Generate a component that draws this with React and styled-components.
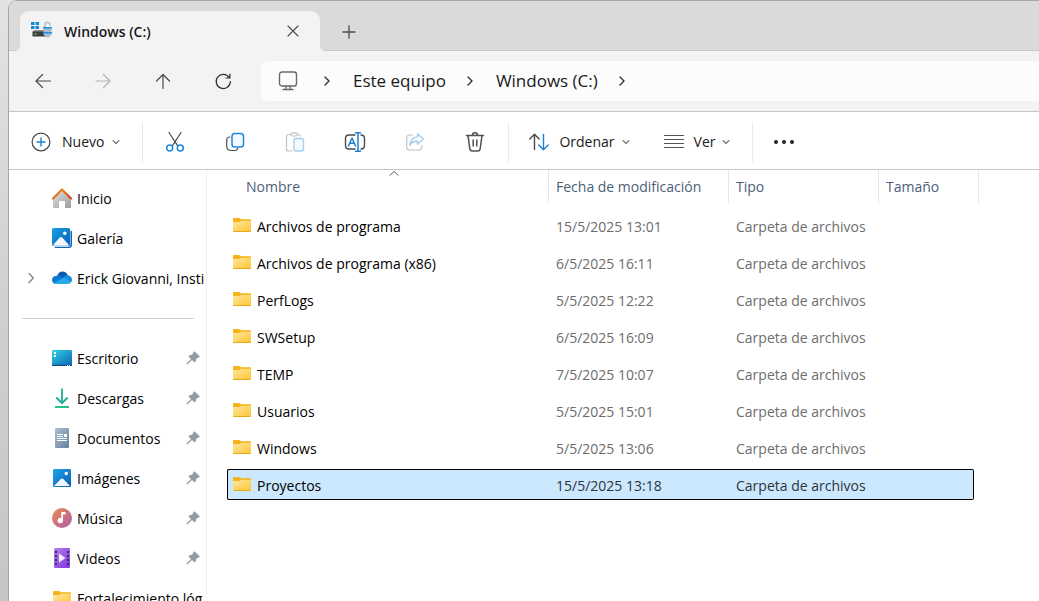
import React from 'react';
import styled, { createGlobalStyle, css } from 'styled-components';

const GlobalStyle = createGlobalStyle`
  *, *::before, *::after { box-sizing: border-box; }
  body {
    margin: 0;
    background: linear-gradient(180deg, #e3e3e3 0%, #d0d0d0 50%, #c6c6c6 100%);
    font-family: "Open Sans", "Noto Sans", sans-serif;
    font-size: 14px;
    line-height: 20px;
    color: #191919;
  }
  button, a { font: inherit; color: inherit; text-decoration: none; }
  svg { display: block; flex: none; }
`;

const Desktop = styled.div`
  height: 100vh;
  padding-left: 8px;
  overflow: hidden;
`;

const Window = styled.div`
  display: flex;
  flex-direction: column;
  height: 100%;
  overflow: hidden;
  background: #fff;
  border: solid #a6a6a6;
  border-width: 1px 0 0 1px;
  border-top-left-radius: 9px;
`;

const PlainButton = styled.button`
  display: inline-flex;
  align-items: center;
  justify-content: center;
  padding: 0;
  border: 0;
  background: none;
  white-space: nowrap;
`;

/* Tabs */

const TabStrip = styled.header`
  flex: none;
  display: flex;
  align-items: flex-end;
  height: 50px;
  padding-left: 11px;
  background: #dadada;
  box-shadow: inset 0 -1px #c8c8c8;
`;

const Tab = styled.div`
  position: relative;
  display: flex;
  align-items: center;
  width: 300px;
  height: 40px;
  padding: 0 17px 0 11px;
  background: #f3f3f3;
  border-radius: 9px 9px 0 0;
  &::before, &::after {
    content: "";
    position: absolute;
    bottom: 0;
    width: 4px;
    height: 4px;
  }
  &::before {
    right: 100%;
    background: radial-gradient(circle at 0 0, transparent 3px, #f3f3f3 4px);
  }
  &::after {
    left: 100%;
    background: radial-gradient(circle at 100% 0, transparent 3px, #f3f3f3 4px);
  }
`;

const TabTitle = styled.span`
  flex: 1;
  margin-left: 11px;
  padding-top: 2px;
  font-weight: 600;
`;

const TabButton = styled(PlainButton)`
  width: 20px;
  height: 20px;
`;

const NewTabButton = styled(PlainButton)`
  width: 20px;
  height: 38px;
  margin-left: 19px;
`;

/* Navigation */

const NavBar = styled.nav`
  flex: none;
  display: flex;
  align-items: center;
  height: 61px;
  padding-left: 14px;
  background: #f3f3f3;
  border-bottom: 1px solid #c6c6c6;
`;

const NavButtons = styled.div`
  display: flex;
  gap: 20px;
`;

const NavButton = styled(PlainButton)`
  width: 40px;
  height: 40px;
`;

const AddressBar = styled.div`
  flex: 1;
  display: flex;
  align-items: center;
  height: 40px;
  margin-left: 18px;
  padding-left: 17px;
  background: #fcfcfc;
  border-radius: 6px 0 0 6px;
`;

const Crumbs = styled.ol`
  display: flex;
  align-items: center;
  gap: 22px;
  margin: 0 0 0 25px;
  padding: 0;
  list-style: none;
  font-size: 17px;
  line-height: 24px;
`;

const Crumb = styled.li`
  display: flex;
  align-items: center;
  gap: 20px;
`;

/* Commands */

const Toolbar = styled.div`
  flex: none;
  display: flex;
  align-items: center;
  height: 58px;
  padding: 2px 0 0 22px;
  border-bottom: 1px solid #c6c6c6;
`;

const CommandButton = styled(PlainButton)`
  height: 40px;
  gap: ${p => p.$gap ?? 10}px;
`;

const Chevron = styled.span`
  margin-left: -3px;
`;

const MoreButton = styled(PlainButton)`
  width: 20px;
  height: 40px;
  margin-left: 21px;
`;

const IconRow = styled.div`
  display: flex;
  gap: 20px;
  padding: 0 13px 0 12px;
`;

const IconButton = styled(PlainButton)`
  width: 40px;
  height: 40px;
`;

const Divider = styled.span`
  width: 1px;
  height: 40px;
  margin-left: ${p => p.$before ?? 0}px;
  background: #ebebeb;
`;

const ViewCommands = styled.div`
  display: flex;
  gap: 34px;
  padding-left: 20px;
`;

/* Sidebar */

const Body = styled.div`
  flex: 1;
  min-height: 0;
  display: flex;
`;

const Sidebar = styled.nav`
  flex: none;
  width: 198px;
  padding-top: 8px;
  overflow: hidden;
  border-right: 1px solid #f0f0f0;
  color: #000;
`;

const PlaceList = styled.ul`
  margin: 0;
  padding: 0;
  list-style: none;
`;

const Place = styled.a`
  display: grid;
  grid-template-columns: 20px 20px minmax(0, 1fr) ${p => (p.$pinned ? 'auto' : '')};
  align-items: center;
  column-gap: 5px;
  height: 40px;
  padding-left: 18px;
  > svg:nth-child(2) { justify-self: center; }
`;

const PlaceLabel = styled.span`
  padding-top: 2px;
  white-space: nowrap;
`;

const PinBox = styled.span`
  padding-right: 6px;
`;

const SidebarRule = styled.hr`
  height: 1px;
  margin: 20px 12px 19px 13px;
  border: 0;
  background: #d0d0d0;
`;

/* Files */

const FilePane = styled.main`
  flex: 1;
  min-width: 0;
  padding: 0 60px 0 20px;
  overflow: hidden;
`;

const FileTable = styled.table`
  width: 100%;
  table-layout: fixed;
  border-collapse: separate;
  border-spacing: 0;
`;

const Col = styled.col`
  width: ${p => p.$w ? `${p.$w}px` : 'auto'};
`;

const HeadCell = styled.th`
  padding: 0 0 4px;
  text-align: left;
  font-weight: 400;
  color: #4c607a;
`;

const HeadLabel = styled.div`
  position: relative;
  display: flex;
  align-items: center;
  height: 33px;
  padding-left: ${p => p.$inset ?? 7}px;
  border-right: 1px solid #e5e5e5;
`;

const SortMark = styled.svg`
  position: absolute;
  top: 0;
  left: 50%;
`;

const Cell = styled.td`
  padding: 3px 0;
  color: #6d6d6d;
`;

const CellBox = styled.div`
  display: flex;
  align-items: center;
  gap: 6px;
  height: 31px;
  padding: 2px 0 0 7px;
  border: 0 solid transparent;
  border-width: 1px 0;
  white-space: nowrap;
`;

const NameBox = styled(CellBox)`
  padding-left: 5px;
  border-left-width: 1px;
  color: #000;
`;

const EndBox = styled(CellBox)`
  margin-right: 5px;
  border-right-width: 1px;
`;

const Row = styled.tr`
  ${p => p.$selected && css`
    ${CellBox} { background: #cce8ff; border-color: #000; color: #2e3439; }
    ${NameBox} { border-radius: 2px 0 0 2px; color: #000; }
    ${EndBox} { border-radius: 0 2px 2px 0; }
  `}
`;

/* Icons */

const Line = ({ w = 20, h = w, stroke = '#4a4a4a', sw = 1.2, children, ...rest }) => (
  <svg width={w} height={h} viewBox={`0 0 ${w} ${h}`} fill="none" stroke={stroke} strokeWidth={sw}
    strokeLinecap="round" strokeLinejoin="round" aria-hidden="true" {...rest}>{children}</svg>
);

const DriveIcon = () => (
  <svg width="22" height="20" viewBox="0 0 22 20" aria-hidden="true">
    <path d="M0 1h3.500v3H0zM4.500 1H8v3H4.500zM0 5h3.500v3H0zM4.500 5H8v3H4.500z" fill="#1488d8" />
    <path d="M3 9h14v2H1.500z" fill="#8c8c8c" />
    <path d="M1.500 10.500h14v5h-14z" fill="#3d3d3d" />
    <path d="M3.500 12.300h2v1.500h-2z" fill="#2fe04a" />
    <path d="M14 7V4a2.500 2.500 0 0 1 5-.3V5" fill="none" stroke="#b9c3cb" strokeWidth="1.700" />
    <path d="M12.500 6.500h8v6c0 2.500-2 3.500-4 4-2-.5-4-1.500-4-4z" fill="#a9bccb" />
    <path d="M12 6h9v1.600h-9zM12 11h9v1.600h-9z" fill="#1a94e2" />
  </svg>
);

const CloseIcon = () => <Line w={14} sw={1.1}><path d="M2 2l10 10M12 2L2 12" /></Line>;
const PlusIcon = () => <Line w={14} sw={1.3}><path d="M7 1v12M1 7h12" /></Line>;
const BackIcon = () => <Line><path d="M17.500 10H3M9.500 3.500L3 10l6.500 6.500" /></Line>;
const ForwardIcon = () => <Line stroke="#b4b4b4"><path d="M3 10h14M10.500 3.500L17 10l-6.500 6.500" /></Line>;
const UpIcon = () => <Line><path d="M10 17.500V3.500M3.500 10L10 3.500l6.500 6.500" /></Line>;
const RefreshIcon = () => (
  <Line stroke="#303030"><path d="M16.200 6.500A7.100 7.100 0 1 0 17.400 10.500M16.900 3v4h-4" /></Line>
);
const MonitorIcon = () => (
  <Line stroke="#6a6a6a" sw={1.4}>
    <rect x="1.500" y="1" width="17" height="14" rx="2.500" />
    <path d="M8 15v2.500M12 15v2.500M5 18.500h10" />
  </Line>
);
const CrumbArrow = () => <Line w={8} h={12} stroke="#333" sw={1.4}><path d="M2 2l4 4-4 4" /></Line>;
const SmallChevron = () => <Line w={8} h={6} stroke="#777" sw={1.1}><path d="M1 1.500l3 3 3-3" /></Line>;
const TreeArrow = () => <Line w={8} h={12} stroke="#8a8a8a" sw={1.5}><path d="M2 1.500L6.300 6 2 10.500" /></Line>;

const NewIcon = () => (
  <Line>
    <circle cx="10" cy="10" r="8.900" />
    <path d="M10 6v8M6 10h8" stroke="#1a7fd0" strokeWidth="1.400" />
  </Line>
);
const CutIcon = () => (
  <Line w={20} h={22}>
    <path d="M4 1.500l8.700 13.300M16 1.500L7.300 14.800" />
    <g stroke="#1e88dc" strokeWidth="1.500"><circle cx="4.700" cy="17" r="3" /><circle cx="15.300" cy="17" r="3" /></g>
  </Line>
);
const CopyIcon = () => (
  <Line>
    <path d="M5 5C3 5 1.700 6 1.700 8v6c0 3 1.500 4.500 4.300 4.500h3.500c1.700 0 2.800-.8 3.200-2" />
    <rect x="7" y="1.500" width="11.500" height="13.500" rx="2.800" fill="#f3f9fe" stroke="#1e88dc" strokeWidth="1.500" />
  </Line>
);
const PasteIcon = () => (
  <Line stroke="#c2c2c2">
    <path d="M6 2.500H3.500c-1.200 0-2 .8-2 2v12.500c0 1.200.8 2 2 2h3.500M12.500 2.500h1c1 0 1.700.6 1.900 1.500" />
    <rect x="6" y=".8" width="6.500" height="3.200" rx="1.500" />
    <rect x="9" y="6.500" width="9.500" height="12.500" rx="2" fill="#f5faff" stroke="#a3cff0" strokeWidth="1.400" />
  </Line>
);
const RenameIcon = () => (
  <Line w={22} h={20} sw={1.400}>
    <path d="M11 3H5C2.800 3 1.500 4.300 1.500 6.500v7C1.500 15.700 2.800 17 5 17h6M17 3c2.200 0 3.500 1.300 3.500 3.500v7c0 2.200-1.300 3.500-3.500 3.500" />
    <path d="M4.500 14L8 6l3.500 8M5.800 11.300h4.400M14 1v18M11.500.8h5M11.500 19.200h5" stroke="#1e7fd4" strokeWidth="1.500" />
  </Line>
);
const ShareIcon = () => (
  <Line stroke="#c2c2c2">
    <path d="M7.500 3H5C3 3 1.700 4.300 1.700 6.300v8.400C1.700 16.700 3 18 5 18h8.500c2 0 3.300-1.300 3.300-3.300v-1.200" />
    <path d="M12.500 1.800L18.500 7l-6 5.200V9.300c-4-.2-6 1.200-7.700 4C5.200 8.500 8 5.300 12.500 4.900z" stroke="#a3cff0" fill="#f5faff" strokeWidth="1.400" />
  </Line>
);
const TrashIcon = () => (
  <Line sw={1.500} stroke="#505050">
    <path d="M1.500 3.500h17M7.500 3.300a2.500 2.500 0 0 1 5 0M3 3.700l1.800 13c.2 1.400 1 2.300 2.400 2.300h5.600c1.400 0 2.200-.9 2.400-2.300l1.800-13M8.200 8v6M11.800 8v6" />
  </Line>
);
const SortIcon = () => (
  <Line sw={1.400}>
    <path d="M5.500 17.500v-15M.8 7L5.500 2.300 10.200 7" />
    <path d="M14.500 2.500v15M9.800 13l4.700 4.700 4.700-4.700" stroke="#1e7fd4" />
  </Line>
);
const ViewIcon = () => (
  <svg width="20" height="20" viewBox="0 0 20 20" fill="#555" aria-hidden="true">
    <path d="M0 3h20v1H0zM0 7h20v1H0zM0 11h20v1H0zM0 15h20v1H0z" />
  </svg>
);
const MoreIcon = () => (
  <svg width="20" height="20" viewBox="0 0 20 20" fill="#222" aria-hidden="true">
    <circle cx="2" cy="10" r="2" /><circle cx="10" cy="10" r="2" /><circle cx="18" cy="10" r="2" />
  </svg>
);

const Gradient = ({ id, from, to }) => (
  <linearGradient id={id} x1="0" y1="0" x2="1" y2="1">
    <stop stopColor={from} /><stop offset="1" stopColor={to} />
  </linearGradient>
);
const Art = ({ w = 20, h = 20, children }) => (
  <svg width={w} height={h} viewBox={`0 0 ${w} ${h}`} aria-hidden="true">{children}</svg>
);

const HomeIcon = () => (
  <Art>
    <Gradient id="homeWall" from="#e0e0e0" to="#9c9c9c" />
    <Gradient id="homeRoof" from="#f59a1b" to="#cf4214" />
    <path d="M10 3l9 8v8.200c0 .5-.3.800-.8.800H13v-7H7v7H1.800c-.5 0-.8-.3-.8-.8V11z" fill="url(#homeWall)" />
    <path d="M1 10.500L10 1.500l9 9" fill="none" stroke="url(#homeRoof)" strokeWidth="2.200" strokeLinecap="round" strokeLinejoin="round" />
  </Art>
);
const GalleryIcon = () => (
  <Art>
    <Gradient id="galleryBlue" from="#1aa0e6" to="#0a5fb4" />
    <path d="M18.500 2.500c1 .2 1.500.8 1.500 1.700V17c0 1.900-1.100 3-3 3H4c-.9 0-1.400-.4-1.600-1.200H16c1.600 0 2.500-1 2.500-2.600z" fill="#1064b4" />
    <rect width="18" height="18" rx="1.500" fill="url(#galleryBlue)" />
    <path d="M1 17l6.600-7.200a2 2 0 0 1 2.800 0L17 17c-.4.500-.8.700-1.400.700H2.400C1.800 17.700 1.400 17.500 1 17z" fill="#f2f8fd" />
    <circle cx="12.800" cy="5.300" r="1.700" fill="#fff" />
  </Art>
);
const CloudIcon = () => (
  <Art>
    <path d="M5 8.500C5.800 5.300 8 3.500 10.500 3.500c2.600 0 4.500 1.500 5.300 4l-3 4z" fill="#0b5cad" />
    <path d="M4.500 16C1.700 16 0 14.200 0 12c0-2.400 1.800-4 4-4 1.500-.8 3.500-.5 5 .6l6 4.400L8 16z" fill="#0f7ad6" />
    <path d="M11 10.500c1-2.500 2.700-3.300 4.800-3.200C18.300 7.500 20 9.300 20 11.800c0 1-.3 1.800-.8 2.500z" fill="#1590df" />
    <path d="M1.600 15L12 9.800l7.300 4.300c-.8 1.200-2 1.900-3.500 1.900H4.500c-1.200 0-2.200-.4-2.900-1z" fill="#28a8ea" />
  </Art>
);
const DesktopIcon = () => (
  <Art>
    <Gradient id="desk" from="#32d3dc" to="#0b63bd" />
    <rect y="2" width="20" height="16" rx="1.200" fill="url(#desk)" />
    <path d="M0 16.800h20c0 .8-.4 1.200-1.200 1.200H1.200C.4 18 0 17.600 0 16.800z" fill="#154c7c" />
    <path d="M2 4h2v2H2zM2 7h2v2H2zM15 16.900h1v1h-1zM17 16.900h1v1h-1z" fill="#f0ffff" />
  </Art>
);
const DownloadIcon = () => (
  <Art w={14}>
    <path d="M7 .500v14M1.300 9.500L7 15.200l5.700-5.700" fill="none" stroke="#1cae90" strokeWidth="1.800" />
    <path d="M0 18h14v2H0z" fill="#2cc08c" />
  </Art>
);
const DocumentIcon = () => (
  <Art w={14}>
    <Gradient id="docBlue" from="#aabfd2" to="#66819d" />
    <rect width="14" height="20" rx="1.200" fill="url(#docBlue)" />
    <path d="M2 6h6v1H2zM2 8h6v1H2zM9 6h3v3H9zM2 10h10v1H2zM2 12h10v1H2z" fill="#fff" />
  </Art>
);
const PicturesIcon = () => (
  <Art w={18} h={18}>
    <Gradient id="picBlue" from="#1fa3e8" to="#0a5fb4" />
    <rect width="18" height="18" rx="1.200" fill="url(#picBlue)" />
    <path d="M1 17l6.800-7a1.800 1.800 0 0 1 2.500 0L17 17z" fill="#f2f8fd" />
    <circle cx="13.300" cy="4.500" r="1.700" fill="#fff" />
  </Art>
);
const MusicIcon = () => (
  <Art>
    <Gradient id="musicDisc" from="#f08c4c" to="#a85cae" />
    <circle cx="10" cy="10" r="10" fill="url(#musicDisc)" />
    <path d="M9.300 4h3.500c.5 0 .9.300.9.800v1c0 .5-.4.800-.9.800H11v6.100A2.700 2.700 0 1 1 9.300 10z" fill="#fff" />
  </Art>
);
const VideoIcon = () => (
  <Art w={16}>
    <Gradient id="videoPurple" from="#b77df0" to="#7d38d8" />
    <rect width="16" height="20" rx="1.200" fill="url(#videoPurple)" />
    <path d="M1 3h2v2H1zM1 7h2v2H1zM1 11h2v2H1zM1 15h2v2H1zM13 3h2v2h-2zM13 7h2v2h-2zM13 11h2v2h-2zM13 15h2v2h-2z" fill="#3f2a66" />
    <path d="M5 5.500l6.500 4.500L5 14.500z" fill="#f4ecff" />
  </Art>
);
const FolderIcon = ({ h = 14 }) => (
  <Art w={18} h={h}>
    <linearGradient id="folderFace" x1="0" y1="0" x2="1" y2="1">
      <stop stopColor="#ffe7a0" /><stop offset="1" stopColor="#fdc638" />
    </linearGradient>
    <path d="M0 1c0-.6.400-1 1-1h5c.5 0 .8.200 1.200.6L8 1.300h9c.6 0 1 .4 1 1V6H0z" fill="#f5b21a" />
    <path d="M0 4h6.500L8 2.700h10V13H0z" fill="url(#folderFace)" />
    <path d="M0 13h18c0 .7-.4 1-1 1H1c-.6 0-1-.3-1-1z" fill="#e8a918" />
  </Art>
);
const PinIcon = () => (
  <Art w={14} h={14}>
    <path d="M8.700.6L13.400 5c.5.500.3 1-.2 1.200l-2.700 1.300-1 3.300c-.1.600-.7.800-1.200.4L6 9 1.300 13.500.400 13.300.600 12.500 5 8 2.800 5.800c-.4-.5-.2-1 .3-1.200l3.300-1L7.600.9c.2-.5.7-.6 1.100-.3z" fill="#929ca4" />
  </Art>
);

const crumbs = ['Este equipo', 'Windows (C:)'];

const tools = [
  ['Cortar', CutIcon], ['Copiar', CopyIcon], ['Pegar', PasteIcon],
  ['Cambiar nombre', RenameIcon], ['Compartir', ShareIcon], ['Eliminar', TrashIcon],
];

const places = [
  ['Inicio', HomeIcon], ['Galería', GalleryIcon], ['Erick Giovanni, Insti', CloudIcon, 'tree'],
];

const pinned = [
  ['Escritorio', DesktopIcon, 'pin'], ['Descargas', DownloadIcon, 'pin'],
  ['Documentos', DocumentIcon, 'pin'], ['Imágenes', PicturesIcon, 'pin'],
  ['Música', MusicIcon, 'pin'], ['Videos', VideoIcon, 'pin'],
  ['Fortalecimiento lóg', FolderIcon],
];

const files = [
  ['Archivos de programa', '15/5/2025 13:01'],
  ['Archivos de programa (x86)', '6/5/2025 16:11'],
  ['PerfLogs', '5/5/2025 12:22'],
  ['SWSetup', '6/5/2025 16:09'],
  ['TEMP', '7/5/2025 10:07'],
  ['Usuarios', '5/5/2025 15:01'],
  ['Windows', '5/5/2025 13:06'],
  ['Proyectos', '15/5/2025 13:18'],
];

const Places = ({ items }) => (
  <PlaceList>
    {items.map(([label, Icon, extra]) => (
      <li key={label}>
        <Place href="#" $pinned={extra === 'pin'}>
          {extra === 'tree' ? <TreeArrow /> : <span />}
          <Icon />
          <PlaceLabel>{label}</PlaceLabel>
          {extra === 'pin' && <PinBox><PinIcon /></PinBox>}
        </Place>
      </li>
    ))}
  </PlaceList>
);

const MenuCommand = ({ icon, label, gap }) => (
  <CommandButton $gap={gap}>
    {icon}
    {label}
    <Chevron><SmallChevron /></Chevron>
  </CommandButton>
);

export default function App() {
  return (
    <Desktop>
      <GlobalStyle />
      <Window>
        <TabStrip>
          <Tab>
            <DriveIcon />
            <TabTitle>Windows (C:)</TabTitle>
            <TabButton aria-label="Cerrar pestaña"><CloseIcon /></TabButton>
          </Tab>
          <NewTabButton aria-label="Nueva pestaña"><PlusIcon /></NewTabButton>
        </TabStrip>

        <NavBar aria-label="Navegación">
          <NavButtons>
            <NavButton aria-label="Atrás"><BackIcon /></NavButton>
            <NavButton aria-label="Adelante" disabled><ForwardIcon /></NavButton>
            <NavButton aria-label="Subir"><UpIcon /></NavButton>
            <NavButton aria-label="Actualizar"><RefreshIcon /></NavButton>
          </NavButtons>
          <AddressBar>
            <MonitorIcon />
            <Crumbs>
              <li><CrumbArrow /></li>
              {crumbs.map(c => (
                <Crumb key={c}><a href="#">{c}</a><CrumbArrow /></Crumb>
              ))}
            </Crumbs>
          </AddressBar>
        </NavBar>

        <Toolbar>
          <MenuCommand icon={<NewIcon />} label="Nuevo" gap={11} />
          <Divider $before={22} />
          <IconRow>
            {tools.map(([label, Icon]) => (
              <IconButton key={label} aria-label={label}><Icon /></IconButton>
            ))}
          </IconRow>
          <Divider />
          <ViewCommands>
            <MenuCommand icon={<SortIcon />} label="Ordenar" />
            <MenuCommand icon={<ViewIcon />} label="Ver" />
          </ViewCommands>
          <Divider $before={22} />
          <MoreButton aria-label="Ver más"><MoreIcon /></MoreButton>
        </Toolbar>

        <Body>
          <Sidebar aria-label="Panel de navegación">
            <Places items={places} />
            <SidebarRule />
            <Places items={pinned} />
          </Sidebar>

          <FilePane>
            <FileTable>
              <colgroup>
                <Col /><Col $w={180} /><Col $w={150} /><Col $w={100} />
              </colgroup>
              <thead>
                <tr>
                  <HeadCell aria-sort="ascending">
                    <HeadLabel $inset={19}>
                      Nombre
                      <SortMark width="12" height="7" viewBox="0 0 12 7" fill="none" stroke="#666" aria-hidden="true">
                        <path d="M1.500 5.500L6 1.500l4.500 4" />
                      </SortMark>
                    </HeadLabel>
                  </HeadCell>
                  <HeadCell><HeadLabel>Fecha de modificación</HeadLabel></HeadCell>
                  <HeadCell><HeadLabel>Tipo</HeadLabel></HeadCell>
                  <HeadCell><HeadLabel>Tamaño</HeadLabel></HeadCell>
                </tr>
              </thead>
              <tbody>
                {files.map(([name, date]) => (
                  <Row key={name} $selected={name === 'Proyectos'}>
                    <Cell><NameBox><FolderIcon h={18} />{name}</NameBox></Cell>
                    <Cell><CellBox>{date}</CellBox></Cell>
                    <Cell><CellBox>Carpeta de archivos</CellBox></Cell>
                    <Cell><EndBox /></Cell>
                  </Row>
                ))}
              </tbody>
            </FileTable>
          </FilePane>
        </Body>
      </Window>
    </Desktop>
  );
}
